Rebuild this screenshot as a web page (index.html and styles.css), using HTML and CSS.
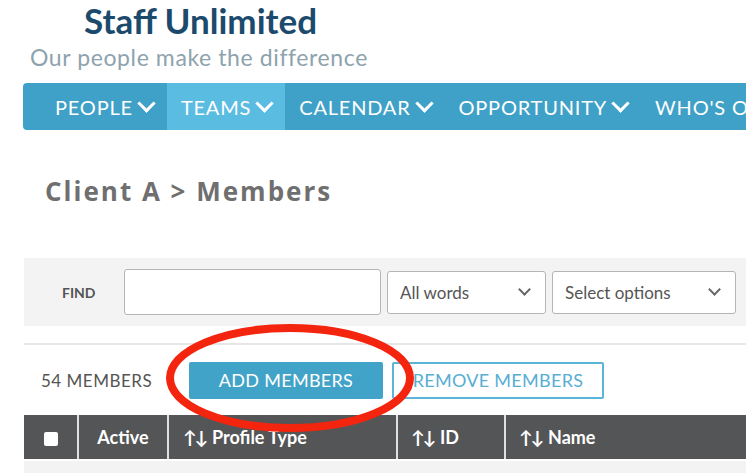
FILE: index.html
```html
<!DOCTYPE html>
<html lang="en">
<head>
    <meta charset="UTF-8">
    <title>Members | Staff Unlimited</title>
    <link rel="stylesheet" href="styles.css">
</head>
<body>
    <div class="branding">
        <h1>Staff Unlimited</h1>
        <p>Our people make the difference</p>
    </div>

    <nav class="menu">
        <a class="first">PEOPLE <span class="chev"></span></a>
        <a class="active">TEAMS <span class="chev"></span></a>
        <a>CALENDAR <span class="chev"></span></a>
        <a>OPPORTUNITY <span class="chev"></span></a>
        <a>WHO'S ON <span class="chev"></span></a>
    </nav>

    <div class="page">
        <h2 class="crumb">Client A &gt; Members</h2>

        <div class="find-panel">
            <label for="find">FIND</label>
            <input type="text" id="find">
            <div class="select words">All words <span class="chev dark"></span></div>
            <div class="select options">Select options <span class="chev dark"></span></div>
        </div>

        <div class="members">
            <div class="toolbar">
                <span class="count">54 MEMBERS</span>
                <button class="add">ADD MEMBERS</button>
                <button class="remove">REMOVE MEMBERS</button>
            </div>
            <div class="table-head">
                <div class="col check"><span class="box"></span></div>
                <div class="col active-col">Active</div>
                <div class="col profile"><span class="sort">↑↓</span>Profile Type</div>
                <div class="col id"><span class="sort">↑↓</span>ID</div>
                <div class="col name"><span class="sort">↑↓</span>Name</div>
            </div>
            <div class="table-row"></div>

            <svg class="circle" width="252" height="112" viewBox="0 0 252 112">
                <ellipse cx="126" cy="55" rx="120" ry="50" fill="none" stroke="#f4250e" stroke-width="8"/>
            </svg>
        </div>
    </div>
</body>
</html>
```

FILE: styles.css
```css
body {
    margin: 0;
    font-family: Lato, 'Open Sans', sans-serif;
    background: #fff;
    color: #555;
    overflow: hidden;
}
.branding {
    height: 83px;
}
.branding h1 {
    margin: 0;
    padding: 0 0 0 84px;
    font-size: 35px;
    font-weight: 700;
    color: #1c4a6d;
    line-height: 40px;
}
.branding p {
    margin: 3px 0 0 30px;
    font-size: 23px;
    color: #8da3ad;
    letter-spacing: 0.6px;
}
.menu {
    display: flex;
    margin-left: 23px;
    height: 47px;
    background: #40a1c8;
    border-radius: 4px 0 0 4px;
    white-space: nowrap;
    overflow: hidden;
}
.menu a {
    display: flex;
    align-items: center;
    padding: 0 14px;
    color: #fff;
    font-size: 20px;
    letter-spacing: 0.8px;
}
.menu a.first {
    padding-left: 32px;
}
.menu a.active {
    background: #5bbce2;
}
.chev {
    display: inline-block;
    width: 10px;
    height: 10px;
    margin: -7px 0 0 7px;
    border-right: 3px solid #fff;
    border-bottom: 3px solid #fff;
    transform: rotate(45deg);
}
.chev.dark {
    border-color: #666;
    width: 7px;
    height: 7px;
    border-width: 2px;
    margin: -5px 0 0 auto;
}
.page {
    padding-left: 24px;
}
.crumb {
    margin: 44px 0 0 21px;
    font-family: 'Open Sans', Lato, sans-serif;
    font-size: 26px;
    font-weight: 700;
    color: #6f6f6f;
    letter-spacing: 2px;
    line-height: 34px;
}
.find-panel {
    display: flex;
    align-items: center;
    margin-top: 50px;
    height: 68px;
    padding-left: 38px;
    background: #f3f3f3;
}
.find-panel label {
    font-size: 14px;
    font-weight: 700;
    color: #555;
    width: 62px;
}
.find-panel input {
    box-sizing: border-box;
    width: 257px;
    height: 46px;
    border: 1px solid #b5b5b5;
    border-radius: 3px;
    background: #fff;
}
.select {
    box-sizing: border-box;
    display: flex;
    align-items: center;
    height: 43px;
    margin-left: 6px;
    padding: 0 16px 0 12px;
    border: 1px solid #b5b5b5;
    border-radius: 3px;
    background: #fff;
    font-size: 17px;
    color: #555;
}
.select.words {
    width: 159px;
}
.select.options {
    width: 184px;
}
.members {
    position: relative;
    margin-top: 17px;
    border-top: 2px solid #e6e6e6;
}
.toolbar {
    display: flex;
    align-items: center;
    height: 70px;
    padding-left: 17px;
}
.count {
    font-size: 17px;
    letter-spacing: 0.5px;
    color: #555;
    width: 148px;
}
.toolbar button {
    box-sizing: border-box;
    height: 37px;
    font-family: Lato, sans-serif;
    font-size: 18px;
    letter-spacing: 0.3px;
    border-radius: 2px;
    cursor: pointer;
}
.add {
    width: 194px;
    background: #42a3c9;
    color: #fff;
    border: none;
}
.remove {
    width: 212px;
    margin-left: 9px;
    background: #fff;
    color: #58aed3;
    border: 2px solid #5bb5d9;
}
.table-head {
    display: flex;
    height: 44px;
    background: #e0e0e0;
    gap: 2px;
}
.col {
    display: flex;
    align-items: center;
    background: #545557;
    color: #fff;
    font-size: 18px;
    font-weight: 700;
}
.col.check {
    width: 53px;
    justify-content: center;
}
.box {
    width: 14px;
    height: 14px;
    background: #fff;
    border-radius: 2px;
    margin-top: 4px;
}
.col.active-col {
    width: 88px;
    justify-content: center;
}
.col.profile {
    width: 227px;
    padding-left: 14px;
    box-sizing: border-box;
}
.col.id {
    width: 106px;
    padding-left: 13px;
    box-sizing: border-box;
}
.col.name {
    flex: 1;
    padding-left: 13px;
}
.sort {
    margin-right: 6px;
    letter-spacing: -2px;
}
.table-row {
    height: 20px;
    background: #f3f3f3;
    margin-top: 2px;
}
.circle {
    position: absolute;
    left: 140px;
    top: -22px;
}
```
